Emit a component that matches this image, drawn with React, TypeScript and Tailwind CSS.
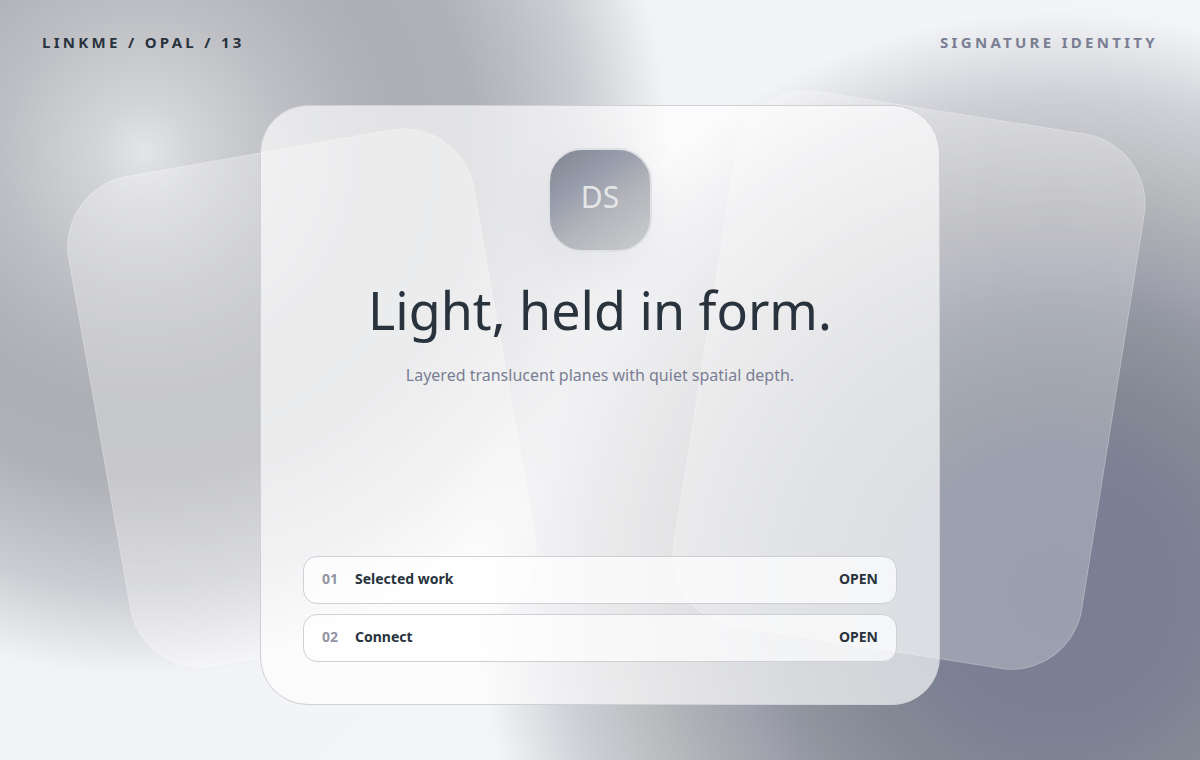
const links = [
  { index: "01", label: "Selected work", href: "#work" },
  { index: "02", label: "Connect", href: "#connect" },
];

function Backdrop() {
  return (
    <div aria-hidden="true" className="pointer-events-none absolute inset-0 overflow-hidden">
      <div className="absolute top-[149px] left-[8%] h-[498px] w-[412px] -rotate-10 rounded-[72px] border border-white/20 bg-white/30" />
      <div className="absolute top-[109px] right-[7%] h-[542px] w-[414px] rotate-9 rounded-[72px] border border-white/20 bg-white/25" />
    </div>
  );
}

export default function App() {
  return (
    <div className="relative flex min-h-screen flex-col bg-[radial-gradient(circle_at_12%_20%,#e4e5e6_0%,#d3d4d7_4%,#c8c9cd_8%,#bdbec3_12%,#b3b4b9_17%,#aeafb4_21%,#b0b1b6_27%,#bfc0c5_32%,#cccdd2_36%,transparent_43%),radial-gradient(circle_at_88%_78%,#797e93_0%,#7b8094_11%,#838994_17%,#8f949f_23%,#9fa1ae_27%,#adaeb3_31%,#bebfc3_36%,#cfd0d6_41%,transparent_48%),linear-gradient(135deg,#eff0f2,#f3f4f6_50%,#f5f6f8)] font-['Noto_Sans',sans-serif] text-[#28333d]">
      <Backdrop />
      <header className="relative flex h-[105px] items-start justify-between px-[42px] pt-8 text-[15px] leading-5 font-bold tracking-[0.22em]">
        <span>LINKME / OPAL / 13</span>
        <span className="text-[#797e93]">SIGNATURE IDENTITY</span>
      </header>
      <main className="relative mx-auto flex min-h-[600px] w-full max-w-[680px] flex-col items-center rounded-[48px] border border-[#cfd0d6] bg-white/65 p-[42px]">
        <div className="flex size-[104px] shrink-0 items-center justify-center rounded-[34px] border-2 border-[#dfe0e3] bg-[linear-gradient(145deg,#7f8490,#9a9fae_35%,#b3b4b9_58%,#cbccd0)] pb-2 text-[30px] text-[#e5e6e8] shadow-[0_18px_48px_rgba(121,126,147,0.1)]">
          DS
        </div>
        <h1 className="mt-7 text-[52px] leading-[60px]">Light, held in form.</h1>
        <p className="mt-[23px] text-base leading-6 text-[#797e93]">
          Layered translucent planes with quiet spatial depth.
        </p>
        <nav className="mt-auto flex w-full flex-col gap-2.5">
          {links.map((link) => (
            <a
              key={link.index}
              href={link.href}
              className="flex h-12 items-center rounded-[14px] border border-[#cfd0d6] bg-white/70 px-[18px] pb-0.5 text-sm font-bold"
            >
              <span className="w-[33px] text-[#9295a3]">{link.index}</span>
              <span>{link.label}</span>
              <span className="ml-auto">OPEN</span>
            </a>
          ))}
        </nav>
      </main>
    </div>
  );
}
